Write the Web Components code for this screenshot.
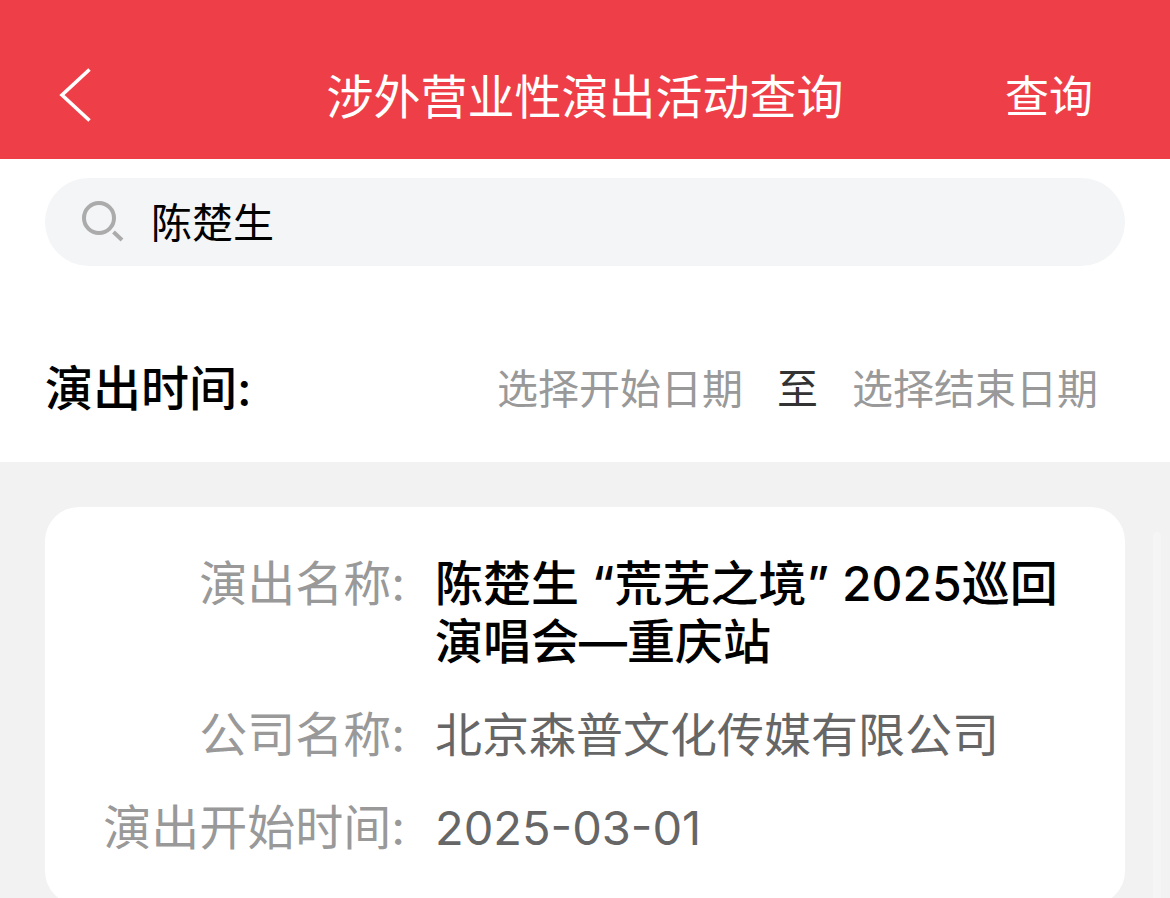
<!DOCTYPE html>
<html lang="zh-CN">
<head>
<meta charset="utf-8">
<meta name="viewport" content="width=device-width, initial-scale=1">
<title>涉外营业性演出活动查询</title>
<style>
  html, body { margin: 0; height: 100%; }
  body { font-family: Inter, "Noto Sans CJK SC", sans-serif; background: #f2f2f2; color: #000; }
</style>
</head>
<body>
<query-page>
  <nav-header slot="header">涉外营业性演出活动查询<span slot="action">查询</span></nav-header>
  <search-field slot="filters" value="陈楚生"></search-field>
  <date-range slot="filters" start="选择开始日期" end="选择结束日期">演出时间:</date-range>
  <result-card>
    <result-row label="演出名称:" strong>陈楚生 “荒芜之境” 2025巡回演唱会—重庆站</result-row>
    <result-row label="公司名称:">北京森普文化传媒有限公司</result-row>
    <result-row label="演出开始时间:">2025-03-01</result-row>
  </result-card>
</query-page>

<script>
const define = (name, html, setup) => {
  const template = document.createElement('template');
  template.innerHTML = html;
  customElements.define(name, class extends HTMLElement {
    constructor() {
      super();
      this.attachShadow({ mode: 'open' }).append(template.content.cloneNode(true));
    }
    connectedCallback() { if (setup) setup(this, this.shadowRoot); }
  });
};

define('query-page', `
  <style>
    :host { display: flex; flex-direction: column; height: 100vh; overflow: hidden; }
    .filters { background: #fff; padding: 19px 45px 43px; display: flex; flex-direction: column; gap: 93px; }
    main { position: relative; flex: 1; min-height: 0; overflow: hidden; padding: 45px 45px 0; }
    .thumb { position: absolute; top: 70px; right: 9px; bottom: 0; width: 8px; border-radius: 4px 4px 0 0; background: #f5f5f5; }
  </style>
  <slot name="header"></slot>
  <div class="filters"><slot name="filters"></slot></div>
  <main><slot></slot><div class="thumb"></div></main>`);

define('nav-header', `
  <style>
    :host { display: block; background: #ee3f49; color: #fff; padding: 35px 56px 0; }
    header { display: grid; grid-template-columns: 1fr auto 1fr; align-items: center; height: 124px; }
    h1 { margin: 0; font-size: 47px; line-height: 58px; font-weight: 400; }
    button { border: 0; padding: 0; background: none; color: inherit; font: inherit; cursor: pointer; }
    .back { justify-self: start; display: flex; }
    .action { justify-self: end; font-size: 44px; line-height: 58px; margin-right: 21px; }
  </style>
  <header>
    <button class="back" type="button" aria-label="返回">
      <svg width="38" height="60" viewBox="0 0 38 60" fill="none" stroke="#fff" stroke-width="3.6"><path d="M33.5 2.5 L6 28 L33.5 53.5"/></svg>
    </button>
    <h1><slot></slot></h1>
    <button class="action" type="button"><slot name="action"></slot></button>
  </header>`);

define('search-field', `
  <style>
    :host { display: block; }
    label { display: flex; align-items: center; gap: 24px; height: 88px; padding: 0 34px; border-radius: 44px; background: #f4f5f7; }
    svg { flex: none; }
    input { flex: 1; min-width: 0; border: 0; padding: 2px 0 0; outline: 0; background: none; color: #000; font: inherit; font-size: 41px; line-height: 58px; }
  </style>
  <label>
    <svg width="48" height="48" viewBox="0 0 48 48" fill="none" stroke="#ababab" stroke-width="4"><circle cx="20" cy="20" r="15"/><path d="M34.5 34 L43 42"/></svg>
    <input type="text" aria-label="搜索">
  </label>`,
  (host, root) => { root.querySelector('input').value = host.getAttribute('value') || ''; });

define('date-range', `
  <style>
    :host { display: flex; align-items: center; justify-content: space-between; height: 60px; }
    .title { font-size: 48px; line-height: 58px; font-weight: 500; }
    .range { display: flex; align-items: center; gap: 34px; padding-right: 27px; font-size: 41px; line-height: 58px; color: #333; }
    button { border: 0; padding: 0; background: none; font: inherit; color: #999; cursor: pointer; }
  </style>
  <div class="title"><slot></slot></div>
  <div class="range"><button type="button" class="start"></button><span>至</span><button type="button" class="end"></button></div>`,
  (host, root) => {
    root.querySelector('.start').textContent = host.getAttribute('start');
    root.querySelector('.end').textContent = host.getAttribute('end');
  });

define('result-card', `
  <style>
    :host { display: flex; flex-direction: column; gap: 35px; padding: 48px; border-radius: 34px; background: #fff; }
  </style>
  <slot></slot>`);

define('result-row', `
  <style>
    :host { display: grid; grid-template-columns: 312px 1fr; align-items: baseline; gap: 30px; font-size: 48px; line-height: 58px; color: #666; }
    .label { color: #999; text-align: right; white-space: nowrap; }
    .value { font-size: 47px; }
    :host([strong]) .value { color: #000; font-size: 48px; font-weight: 500; }
  </style>
  <div class="label"></div>
  <div class="value"><slot></slot></div>`,
  (host, root) => { root.querySelector('.label').textContent = host.getAttribute('label'); });
</script>
</body>
</html>
